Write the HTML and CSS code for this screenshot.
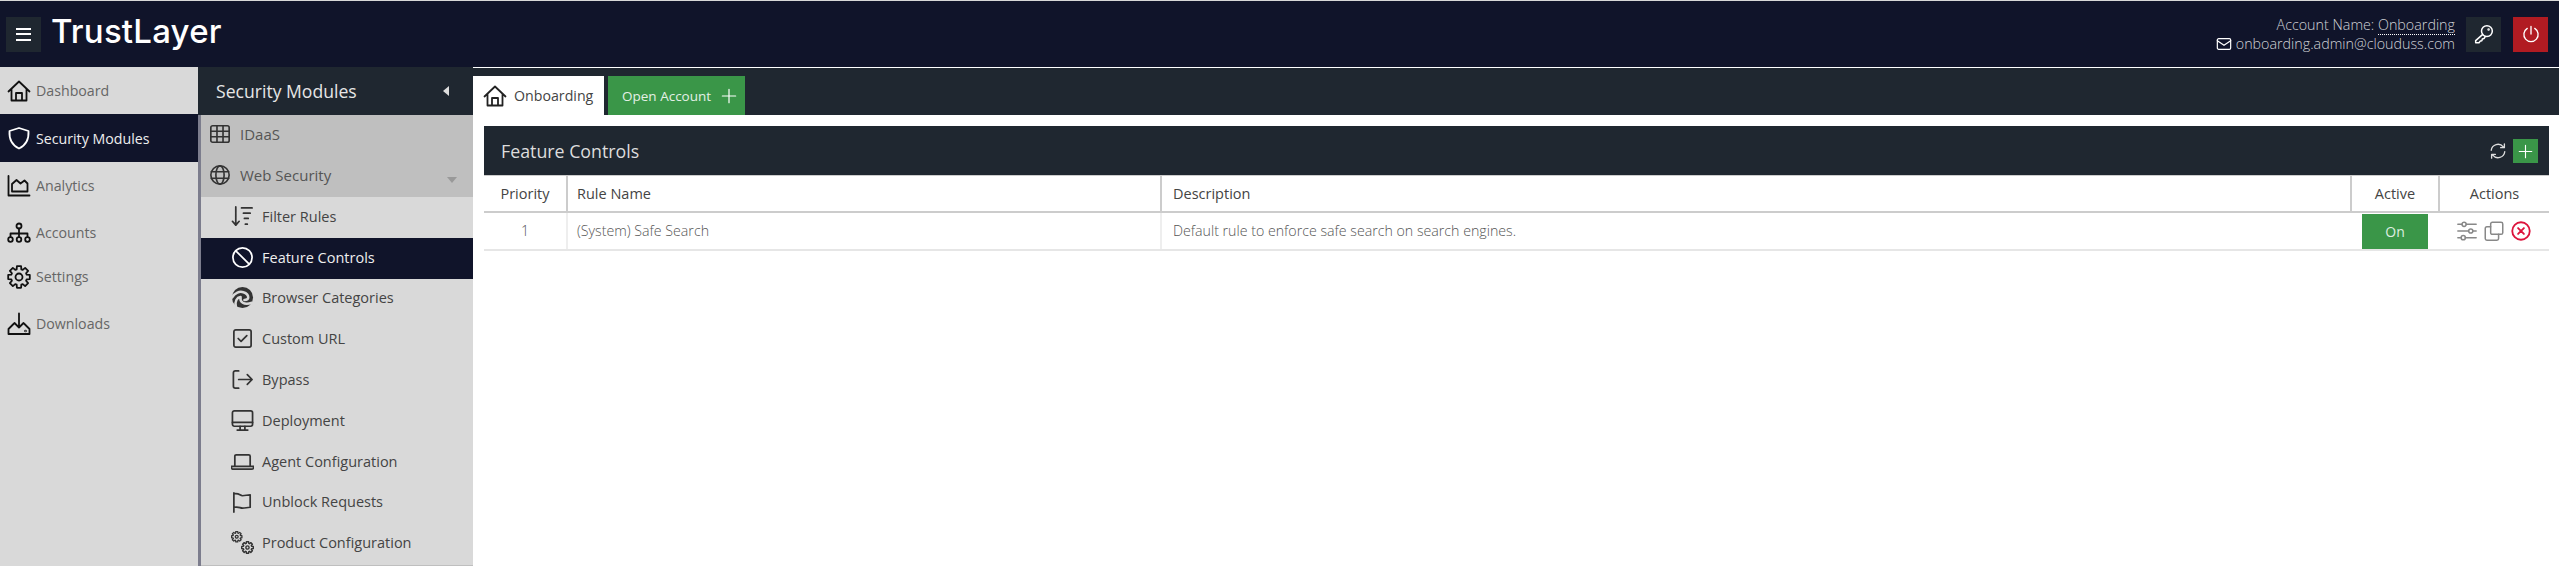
FILE: index.html
```html
<!DOCTYPE html>
<html lang="en">
<head>
    <meta charset="UTF-8">
    <meta name="viewport" content="width=device-width, initial-scale=1.0">
    <title>TrustLayer - Feature Controls</title>
    <link rel="stylesheet" href="styles.css">
</head>
<body>
    <svg class="sprite" width="0" height="0">
        <symbol id="i-house" viewBox="0 0 24 24"><path d="M1.500 12.500 12 2.500l10.500 10M4.500 10v11.500h15V10M9 21.500V14h6v7.500"/></symbol>
        <symbol id="i-shield" viewBox="0 0 24 24"><path d="M12 2 21.500 5c.5 8-2 14-9.500 17.500C4.500 19 2 13 2.500 5Z"/></symbol>
        <symbol id="i-graph" viewBox="0 0 24 24"><path d="M1.500 2v19.500h21M5 17.500V10l4.500-4 4 3.500 4-3 3 3v8Z"/></symbol>
        <symbol id="i-tree" viewBox="0 0 24 24"><circle cx="12" cy="5" r="2.500"/><circle cx="3.500" cy="18.500" r="2.300"/><circle cx="12" cy="18.500" r="2.300"/><circle cx="20.500" cy="18.500" r="2.300"/><path d="M12 7.500v8.700M3.500 16v-3.500h17V16"/></symbol>
        <symbol id="i-gear" viewBox="0 0 24 24"><path id="gear-shape" d="M9.660 4.350 9.900 1.200h4.200l.24 3.150 1.410.59 2.400-2.060 2.970 2.970-2.060 2.400.59 1.410 3.150.24v4.200l-3.150.24-.59 1.410 2.060 2.400-2.970 2.970-2.400-2.060-1.410.59-.24 3.150H9.900l-.24-3.150-1.410-.59-2.400 2.060-2.970-2.970 2.060-2.400-.59-1.410-3.150-.24V9.900l3.150-.24.59-1.410-2.060-2.400 2.970-2.970 2.400 2.060Z"/><circle cx="12" cy="12" r="3.500"/></symbol>
        <symbol id="i-download" viewBox="0 0 24 24"><path d="M12 1.500v14M7.500 11l4.500 4.500 4.500-4.500M7 11.500l-5.500 5.500v5h21v-5l-5.500-5.500"/><circle cx="18.500" cy="19" r=".4"/></symbol>
        <symbol id="i-table" viewBox="0 0 24 24"><rect x="2" y="3" width="20" height="18" rx="2"/><path d="M2 9h20M2 15h20M8.700 3v18M15.300 3v18"/></symbol>
        <symbol id="i-globe" viewBox="0 0 24 24"><circle cx="12" cy="12" r="10"/><ellipse cx="12" cy="12" rx="4.500" ry="10"/><path d="M2.500 8.500h19M2.500 15.500h19"/></symbol>
        <symbol id="i-sort" viewBox="0 0 24 24"><path d="M5 2v19M1.500 17 5 21l3.500-4M11 3h11M13 8.500h7M14 14h4M15 20h2"/></symbol>
        <symbol id="i-ban" viewBox="0 0 24 24"><circle cx="12" cy="12" r="10"/><path d="M5 5l14 14"/></symbol>
        <symbol id="i-edge" viewBox="0 0 24 24"><circle class="fill" cx="12" cy="12" r="11"/><path class="cut" d="M1 12c3-5 8-7 12-5.500 3 1 5 3 5 5.500 0 1.500-1.500 2.500-4 2.500"/><path class="cut" d="M5 21c-1-5 1-9 5-9.500-1 5 3 9 12 6"/></symbol>
        <symbol id="i-check" viewBox="0 0 24 24"><rect x="3" y="3" width="18" height="18" rx="2"/><path d="m7.500 12 3 3 6-6"/></symbol>
        <symbol id="i-exit" viewBox="0 0 24 24"><path d="M8 3H4.500Q2.500 3 2.500 5v14q0 2 2 2H8M8 12h14M17 7l5 5-5 5"/></symbol>
        <symbol id="i-display" viewBox="0 0 24 24"><rect x="1.500" y="2" width="21" height="16" rx="2"/><path d="M1.500 14h21M9.500 18v4M14.500 18v4M6.500 22h11"/></symbol>
        <symbol id="i-laptop" viewBox="0 0 24 24"><path d="M4 17V6.500Q4 5 5.500 5h13Q20 5 20 6.500V17M.5 17h23v1.500q0 1.500-2 1.500h-19q-2 0-2-1.500Z"/></symbol>
        <symbol id="i-flag" viewBox="0 0 24 24"><path d="M3 23V3M3 4c6-1 6 2 9 2s5-1 8-1v13c-3 0-5 1-8 1s-3-2-9-1"/></symbol>
        <symbol id="i-gears" viewBox="0 0 24 24">
            <g transform="scale(.5)" stroke-width="2.600"><use href="#gear-shape"/><circle cx="12" cy="12" r="3"/></g>
            <g transform="translate(10.500 10.500) scale(.56)" stroke-width="2.600"><use href="#gear-shape"/><circle cx="12" cy="12" r="3"/></g>
        </symbol>
        <symbol id="i-mail" viewBox="0 0 24 24"><rect x="2" y="4" width="20" height="16" rx="2"/><path d="m2 7 10 7 10-7"/></symbol>
        <symbol id="i-key" viewBox="0 0 24 24"><circle cx="15.500" cy="8.500" r="6.500"/><path d="M10.500 12.500 2 20v2.500h4l1.500-2 2-.5.5-2 2-.5 1.500-2.500"/><circle cx="17.500" cy="6.500" r=".6"/></symbol>
        <symbol id="i-power" viewBox="0 0 24 24"><path d="M12 2v10M7 4.500a9.500 9.500 0 1 0 10 0"/></symbol>
        <symbol id="i-sync" viewBox="0 0 24 24"><path d="M3 11a9 9 0 0 1 16-4.500M21 13a9 9 0 0 1-16 4.500M20.500 2.500v5h-5M3.500 21.500v-5h5"/></symbol>
        <symbol id="i-plus" viewBox="0 0 24 24"><path d="M12 2v20M2 12h20"/></symbol>
        <symbol id="i-sliders" viewBox="0 0 24 24"><path d="M1 4h5M11 4h12M1 12h13M19 12h4M1 20h4M10 20h13"/><circle cx="8.500" cy="4" r="2.500"/><circle cx="16.500" cy="12" r="2.500"/><circle cx="7.500" cy="20" r="2.500"/></symbol>
        <symbol id="i-copy" viewBox="0 0 24 24"><rect x="8" y="1.500" width="14.500" height="14.500" rx="2"/><path d="M8 7H3.500q-2 0-2 2v12q0 2 2 2h12q2 0 2-2v-5"/></symbol>
        <symbol id="i-xcircle" viewBox="0 0 24 24"><circle cx="12" cy="12" r="10.500"/><path d="m8.500 8.500 7 7M15.500 8.500l-7 7"/></symbol>
    </svg>

    <header class="topbar">
        <button class="square-btn menu-btn">
            <span class="burger"></span>
        </button>
        <div class="logo">TrustLayer</div>
        <div class="account">
            <div>Account Name: <span class="account-link">Onboarding</span></div>
            <div class="account-mail"><svg class="icon"><use href="#i-mail"/></svg> onboarding.admin@clouduss.com</div>
        </div>
        <button class="square-btn key-btn"><svg class="icon"><use href="#i-key"/></svg></button>
        <button class="square-btn power-btn"><svg class="icon"><use href="#i-power"/></svg></button>
    </header>

    <div class="main">
        <nav class="sidenav">
            <a class="nav-item"><svg class="icon"><use href="#i-house"/></svg>Dashboard</a>
            <a class="nav-item active"><svg class="icon"><use href="#i-shield"/></svg>Security Modules</a>
            <a class="nav-item"><svg class="icon"><use href="#i-graph"/></svg>Analytics</a>
            <a class="nav-item"><svg class="icon"><use href="#i-tree"/></svg>Accounts</a>
            <a class="nav-item nav-settings"><svg class="icon"><use href="#i-gear"/></svg>Settings</a>
            <a class="nav-item"><svg class="icon"><use href="#i-download"/></svg>Downloads</a>
        </nav>

        <aside class="subnav">
            <div class="subnav-title">
                <span>Security Modules</span>
                <span class="arrow-left"></span>
            </div>
            <div class="subnav-list">
                <div class="group">
                    <a class="group-item"><svg class="icon"><use href="#i-table"/></svg>IDaaS</a>
                    <a class="group-item"><svg class="icon"><use href="#i-globe"/></svg>Web Security<span class="arrow-down"></span></a>
                </div>
                <div class="children">
                    <a class="sub-item"><svg class="icon"><use href="#i-sort"/></svg>Filter Rules</a>
                    <a class="sub-item active"><svg class="icon"><use href="#i-ban"/></svg>Feature Controls</a>
                    <a class="sub-item"><svg class="icon"><use href="#i-edge"/></svg>Browser Categories</a>
                    <a class="sub-item"><svg class="icon"><use href="#i-check"/></svg>Custom URL</a>
                    <a class="sub-item"><svg class="icon"><use href="#i-exit"/></svg>Bypass</a>
                    <a class="sub-item"><svg class="icon"><use href="#i-display"/></svg>Deployment</a>
                    <a class="sub-item"><svg class="icon"><use href="#i-laptop"/></svg>Agent Configuration</a>
                    <a class="sub-item"><svg class="icon"><use href="#i-flag"/></svg>Unblock Requests</a>
                    <a class="sub-item"><svg class="icon"><use href="#i-gears"/></svg>Product Configuration</a>
                </div>
            </div>
        </aside>

        <section class="content">
            <div class="tabs">
                <a class="tab tab-home"><svg class="icon"><use href="#i-house"/></svg>Onboarding</a>
                <a class="tab tab-open">Open Account<svg class="icon"><use href="#i-plus"/></svg></a>
            </div>
            <div class="panel">
                <div class="panel-head">
                    <span>Feature Controls</span>
                    <svg class="icon sync"><use href="#i-sync"/></svg>
                    <button class="add-btn"><svg class="icon"><use href="#i-plus"/></svg></button>
                </div>
                <table class="rules">
                    <thead>
                        <tr>
                            <th class="col-priority">Priority</th>
                            <th class="col-name">Rule Name</th>
                            <th class="col-desc">Description</th>
                            <th class="col-active">Active</th>
                            <th class="col-actions">Actions</th>
                        </tr>
                    </thead>
                    <tbody>
                        <tr>
                            <td class="col-priority">1</td>
                            <td class="col-name">(System) Safe Search</td>
                            <td class="col-desc">Default rule to enforce safe search on search engines.</td>
                            <td class="col-active"><button class="on-btn">On</button></td>
                            <td class="col-actions">
                                <div class="row-actions">
                                    <svg class="icon"><use href="#i-sliders"/></svg>
                                    <svg class="icon"><use href="#i-copy"/></svg>
                                    <svg class="icon danger"><use href="#i-xcircle"/></svg>
                                </div>
                            </td>
                        </tr>
                    </tbody>
                </table>
            </div>
        </section>
    </div>
</body>
</html>
```

FILE: styles.css
```css
* {
    box-sizing: border-box;
}

html, body {
    height: 100%;
}

body {
    margin: 0;
    overflow: hidden;
    background-color: white;
    color: #444;
    font-family: 'Open Sans', sans-serif;
    font-size: 15px;
}

a {
    display: flex;
    align-items: center;
}

button {
    border: none;
    padding: 0;
    font-family: inherit;
}

.sprite {
    position: absolute;
}

.icon {
    flex: none;
    width: 22px;
    height: 22px;
    fill: none;
    stroke: currentColor;
    stroke-width: 1.8;
    stroke-linecap: round;
    stroke-linejoin: round;
}

/* top bar */
.topbar {
    display: flex;
    align-items: center;
    height: 67px;
    padding: 0 11px 0 6px;
    background-color: #10142a;
    border-top: 1px solid #d8d8d8;
    color: #cfd1d6;
}

.square-btn {
    display: flex;
    align-items: center;
    justify-content: center;
    width: 35px;
    height: 35px;
    color: white;
    background-color: #1f2730;
}

.burger {
    width: 15px;
    height: 13px;
    border-top: 2px solid white;
    border-bottom: 2px solid white;
    background: linear-gradient(white, white) center / 100% 2px no-repeat;
}

.logo {
    margin-left: 10px;
    margin-top: -7px;
    color: white;
    font-family: Inter, sans-serif;
    font-size: 33px;
    font-weight: 500;
    letter-spacing: 0.2px;
}

.account {
    margin-left: auto;
    margin-right: 11px;
    text-align: right;
    font-weight: 300;
    font-size: 14.300px;
    line-height: 19px;
}

.account-link {
    border-bottom: 1px dotted white;
}

.account-mail .icon {
    width: 16px;
    height: 16px;
    vertical-align: -3px;
    color: white;
}

.key-btn .icon {
    width: 20px;
    height: 20px;
}

.power-btn {
    margin-left: 12px;
    background-color: #b11b22;
}

.power-btn .icon {
    width: 18px;
    height: 18px;
}

/* layout */
.main {
    display: flex;
    height: 499px;
}

.sidenav {
    width: 198px;
    flex: none;
    background-color: #d9d9d9;
}

.nav-item {
    gap: 5px;
    height: 47px;
    padding-left: 7px;
    color: #666;
    font-size: 14.200px;
}

.nav-item .icon {
    width: 24px;
    height: 24px;
    color: #111;
}

.nav-item.active {
    height: 48px;
    background-color: #10142a;
    color: #eee;
}

.nav-item.active .icon {
    color: white;
}

.nav-settings {
    margin-top: -3px;
}

.subnav {
    display: flex;
    flex-direction: column;
    width: 275px;
    flex: none;
}

.subnav-title {
    display: flex;
    align-items: center;
    justify-content: space-between;
    height: 48px;
    padding: 0 24px 0 18px;
    background-color: #1f2730;
    color: #e6e6e6;
    font-size: 17.600px;
}

.arrow-left {
    width: 0;
    height: 0;
    border-top: 5px solid transparent;
    border-bottom: 5px solid transparent;
    border-right: 6px solid #ddd;
}

.subnav-list {
    flex: 1;
    border-left: 3px solid #7c7d8d;
    background-color: #bfbfbf;
}

.group {
    height: 82px;
}

.group-item {
    position: relative;
    gap: 9px;
    height: 41px;
    padding: 0 0 3px 8px;
    color: #555;
    font-size: 15px;
}

.group-item .icon {
    color: #333;
}

.arrow-down {
    position: absolute;
    right: 16px;
    top: 21px;
    width: 0;
    height: 0;
    border-left: 5px solid transparent;
    border-right: 5px solid transparent;
    border-top: 6px solid #999;
}

.children {
    padding-bottom: 1px;
    background-color: #d9d9d9;
}

.sub-item {
    gap: 8px;
    height: 40.800px;
    padding: 0 0 2px 30px;
    color: #444;
    font-size: 14.500px;
}

.sub-item .icon {
    width: 23px;
    height: 23px;
    color: #333;
}

.sub-item.active {
    background-color: #10142a;
    color: #eee;
}

.sub-item.active .icon {
    color: white;
}

#i-edge .fill {
    fill: #333;
    stroke: none;
}

#i-edge .cut {
    stroke: #d9d9d9;
    stroke-width: 2.600;
}

/* content */
.content {
    flex: 1;
    min-width: 0;
}

.tabs {
    display: flex;
    align-items: flex-end;
    gap: 4px;
    height: 48px;
    background-color: #1f2730;
    border-top: 1px solid white;
}

.tab {
    height: 39px;
    font-size: 14.200px;
}

.tab-home {
    gap: 7px;
    width: 131px;
    padding-left: 10px;
    background-color: white;
    color: #444;
}

.tab-home .icon {
    width: 24px;
    height: 24px;
    color: #222;
}

.tab-open {
    gap: 10px;
    width: 137px;
    padding-left: 14px;
    background-color: #3a9648;
    color: #e4f0e6;
    font-size: 13.500px;
}

.tab-open .icon {
    width: 16px;
    height: 16px;
    color: white;
}

.panel {
    padding: 11px 10px 0 11px;
}

.panel-head {
    display: flex;
    align-items: center;
    height: 49px;
    padding: 1px 11px 0 17px;
    background-color: #1f2730;
    color: #ddd;
    font-size: 17.800px;
}

.sync {
    margin-left: auto;
    margin-right: 6px;
    width: 18px;
    height: 18px;
    color: #ddd;
}

.add-btn {
    display: flex;
    align-items: center;
    justify-content: center;
    width: 25px;
    height: 24px;
    background-color: #3a9648;
    color: white;
}

.add-btn .icon {
    width: 15px;
    height: 15px;
}

.rules {
    width: 100%;
    border-collapse: collapse;
    table-layout: fixed;
}

.rules th {
    height: 36px;
    padding: 0 11px;
    font-weight: 400;
    font-size: 14.500px;
    color: #444;
    text-align: left;
    border-top: 1px solid #ccc;
    border-bottom: 2px solid #ccc;
    border-right: 2px solid #ccc;
}

.rules th:last-child {
    border-right: none;
}

.rules td {
    height: 36px;
    padding: 0 11px;
    font-weight: 300;
    font-size: 14.200px;
    color: #555;
    border-bottom: 2px solid #e6e6e6;
    border-right: 2px solid #eee;
}

.rules td.col-desc,
.rules td.col-active,
.rules td:last-child {
    border-right: none;
}

.rules .col-priority,
.rules .col-active,
.rules .col-actions {
    text-align: center;
}

.rules .col-name {
    padding-left: 9px;
}

.col-priority { width: 83px; }
.col-name { width: 594px; }
.col-active { width: 88px; }
.col-actions { width: 110px; }

.rules td.col-active {
    padding: 1px 0 0;
}

.on-btn {
    display: block;
    width: 66px;
    height: 35px;
    margin: 0 auto;
    background-color: #3a9648;
    color: #dfeee1;
    font-size: 14px;
}

.row-actions {
    display: flex;
    justify-content: center;
    gap: 7px;
    color: #888;
}

.row-actions .icon {
    width: 20px;
    height: 20px;
}

.row-actions .danger {
    color: #dc143c;
    stroke-width: 2.200;
}
```
